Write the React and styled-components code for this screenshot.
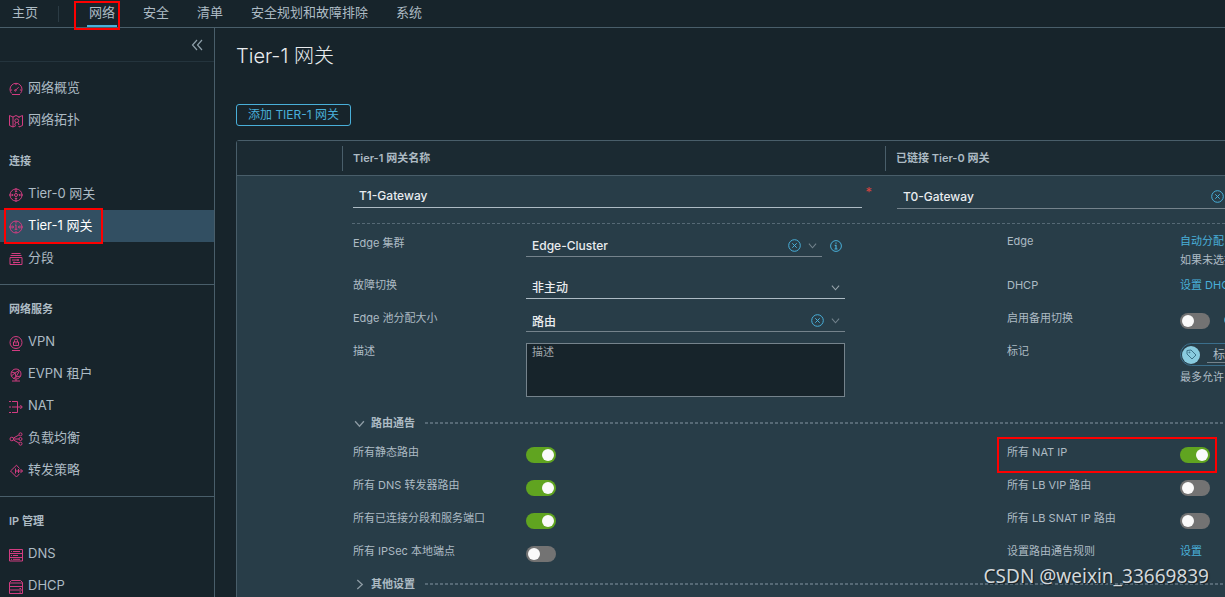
import React from 'react';
import styled, { createGlobalStyle, css } from 'styled-components'

const GlobalStyle = createGlobalStyle`
    *, *::before, *::after {
        box-sizing: border-box;
    }
    body {
        margin: 0;
        background: #17242b;
        color: #adbbc4;
        font-family: Inter, "Noto Sans CJK SC", sans-serif;
        font-size: 13px;
    }
    input, select, textarea, button {
        font-family: inherit;
    }
`

const Page = styled.div`
    position: relative;
    display: flex;
    flex-direction: column;
    height: 100vh;
    overflow: hidden;
`

/* red annotation frame lying over the marked item */
const marker = css`
    &::after {
        content: '';
        position: absolute;
        inset: ${props => props.$markInset};
        width: ${props => props.$markWidth || 'auto'};
        border: 2px solid #fe0000;
        pointer-events: none;
        z-index: 2;
    }
`

const TopNav = styled.nav`
    display: flex;
    flex: none;
    height: 28px;
    border-bottom: 1px solid #495e6a;
`

const TopLink = styled.a`
    position: relative;
    padding: 0 14px;
    line-height: 24px;
    color: #adbbc4;
    text-decoration: none;
    white-space: nowrap;
    &:first-child {
        padding-left: 12px;
    }
    ${props => props.$active && css`
        &::before {
            content: '';
            position: absolute;
            left: 12px;
            right: 12px;
            bottom: 0;
            height: 2px;
            background: #49afd9;
        }
    `}
    ${props => props.$markInset && marker}
`

const NavDivider = styled.span`
    width: 1px;
    height: 16px;
    margin: 6px 16px 0 6px;
    background: #2b3b44;
`

const Body = styled.div`
    display: flex;
    flex: 1;
    min-height: 0;
`

const Sidebar = styled.aside`
    flex: none;
    width: 215px;
    border-right: 1px solid #495e6a;
    overflow: hidden;
`

const CollapseRow = styled.div`
    display: flex;
    justify-content: flex-end;
    align-items: center;
    height: 34px;
    padding-right: 10px;
    border-bottom: 1px solid #24343d;
`

const IconButton = styled.button`
    display: flex;
    flex: none;
    padding: 0;
    border: 0;
    background: none;
    color: ${props => props.$color || '#49afd9'};
`

const SideGroup = styled.section`
    padding: ${props => props.$first ? '10px 0 1px' : '8px 0 10px'};
    border-bottom: ${props => props.$line ? '1px solid #495e6a' : '0'};
`

const SideTitle = styled.h2`
    margin: 0;
    padding-left: 9px;
    font-size: 11px;
    font-weight: 600;
    line-height: 33px;
`

const SideLink = styled.a`
    position: relative;
    display: flex;
    gap: 5px;
    height: 32px;
    padding-left: 9px;
    line-height: 31px;
    color: ${props => props.$active ? '#ffffff' : '#adbbc4'};
    background: ${props => props.$active ? '#324f62' : 'transparent'};
    text-decoration: none;
    svg {
        margin-top: 10px;
    }
    ${props => props.$markInset && marker}
`

const Main = styled.main`
    flex: 1;
    min-width: 0;
    padding: 12px 0 0 21px;
    overflow: hidden;
`

const Title = styled.h1`
    margin: 0 0 32px;
    font-size: 20px;
    font-weight: 300;
    line-height: 32px;
    color: #e9ecef;
`

const OutlineButton = styled.button`
    display: block;
    height: 22px;
    padding: 0 11px;
    border: 1px solid #49afd9;
    border-radius: 3px;
    background: none;
    color: #49afd9;
    font-size: 12px;
    line-height: 18px;
`

const Grid = styled.table`
    table-layout: fixed;
    width: 100%;
    min-width: 1436px;
    margin-top: 14px;
    border: 1px solid #495e6a;
    border-radius: 3px;
    border-spacing: 0;
    background: #283d48;
    td, th {
        padding: 0;
        vertical-align: top;
    }
`

const HeadCell = styled.th`
    height: 35px;
    background: #1b2a32;
    border-bottom: 1px solid #495e6a;
    text-align: left;
    font-size: 11px;
    font-weight: 600;
    div {
        margin-top: 5px;
        padding-left: 10px;
        border-left: 1px solid #495e6a;
        line-height: 25px;
    }
`

const NameCell = styled.div`
    display: flex;
    gap: 3px;
    padding: 8px 13px 0 11px;
`

const GatewayCell = styled.div`
    padding: 9px 0 14px 12px;
`

const Required = styled.span`
    color: #d8433f;
    font-size: 13px;
    line-height: 16px;
`

const fieldText = css`
    flex: 1;
    min-width: 0;
    width: 100%;
    height: 100%;
    padding: 0 6px;
    border: 0;
    outline: 0;
    background: none;
    color: #e9ecef;
    font-size: 12px;
    font-weight: 500;
`

const Field = styled.div`
    display: flex;
    align-items: center;
    gap: 7px;
    flex: ${props => props.$width ? 'none' : '1'};
    width: ${props => props.$width || 'auto'};
    height: ${props => props.$tall ? '24px' : '22px'};
    padding-right: 5px;
    border-bottom: 1px solid ${props => props.$plain ? '#adbbc4' : '#75838c'};
`

const TextInput = styled.input`
    ${fieldText}
`

const Select = styled.select`
    ${fieldText}
    appearance: none;
`

const TextArea = styled.textarea`
    display: block;
    width: 319px;
    height: 54px;
    padding: 0 5px;
    border: 1px solid #75838c;
    outline: 0;
    background: #17242b;
    color: #adbbc4;
    font-size: 11px;
    line-height: 16px;
    resize: none;
    &::placeholder {
        color: #a0a6aa;
        opacity: 1;
    }
`

const Details = styled.div`
    margin-left: 10px;
    padding-bottom: 30px;
    font-size: 11px;
    line-height: 16px;
`

const Dashes = styled.hr`
    flex: 1;
    height: ${props => props.$thick ? '2px' : '1px'};
    margin: 0;
    border: 0;
    background: repeating-linear-gradient(90deg, #566975 0 3px, transparent 3px 5px);
`

const Columns = styled.div`
    display: grid;
    grid-template-columns: 1fr 1fr;
    padding: 0 10px 0 1px;
`

const Column = styled.div`
    padding-top: ${props => props.$top || '0'};
`

const Row = styled.div`
    position: relative;
    display: grid;
    grid-template-columns: 173px 1fr;
    align-items: start;
    min-height: ${props => props.$height || '33px'};
    ${props => props.$markInset && marker}
`

const Control = styled.div`
    display: flex;
    align-items: center;
    gap: ${props => props.$gap || '8px'};
    white-space: nowrap;
`

const Stack = styled.div`
    display: flex;
    flex-direction: column;
    align-items: flex-start;
    gap: 3px;
`

const Action = styled.a`
    color: #49afd9;
    text-decoration: none;
`

const SectionHead = styled.h3`
    display: flex;
    align-items: center;
    gap: 10px;
    margin: 0;
    padding-left: 2px;
    font-size: 11px;
    font-weight: 600;
    line-height: 16px;
    button {
        display: flex;
        align-items: center;
        gap: 6px;
        padding: 0;
        border: 0;
        background: none;
        color: inherit;
        font: inherit;
    }
`

const Switch = styled.input`
    appearance: none;
    flex: none;
    display: flex;
    align-items: center;
    width: 30px;
    height: 16px;
    margin: 3px 0 0;
    padding: 0 2px;
    border-radius: 8px;
    background: #737373;
    &::before {
        content: '';
        width: 12px;
        height: 12px;
        border-radius: 50%;
        background: #fafafa;
    }
    &:checked {
        justify-content: flex-end;
        background: #60a420;
    }
`

const TagBox = styled.div`
    display: flex;
    align-items: center;
    gap: 7px;
    width: 240px;
    height: 23px;
    padding-left: 1px;
    border: 1px solid #3b6f8c;
    border-radius: 12px;
`

const TagBadge = styled.span`
    display: flex;
    align-items: center;
    justify-content: center;
    width: 18px;
    height: 18px;
    border-radius: 50%;
    background: #89cbdf;
    color: #3d7289;
`

const TagInput = styled.input`
    width: 90px;
    height: 17px;
    padding: 0 6px;
    border: 0;
    border-bottom: 1px solid #75838c;
    outline: 0;
    background: none;
    font-size: 12px;
    &::placeholder {
        color: #adbbc4;
        opacity: 1;
    }
`

const Watermark = styled.div`
    position: absolute;
    right: 16px;
    bottom: 8px;
    font-family: "Noto Sans", sans-serif;
    font-size: 19px;
    line-height: 26px;
    color: #d3d8db;
    text-shadow: 1px 1px 1px #101a20;
`

const iconShapes = {
    overview: <><path d="M3 12.5h8M2.6 11.4A6 6 0 1 1 11.4 11.4M1.5 8h1.6M10.9 8h1.6M7 1.5v1.6M6.4 8.4l3.2-3.2" /><circle cx="6.4" cy="8.4" r=".8" /></>,
    topology: <><path d="M.5 1.5 4 3v10L.5 11.500zM10 4V3l3.500-1.500v10L10 13v-1M4 3l3-1.500L10 3M4 13l3-1.500M6.500 8.500 5.800 11M9 8.500l1 2.500" /><circle cx="7.700" cy="6.700" r="1.900" /></>,
    tier0: <><circle cx="7" cy="7" r="6" /><circle cx="7" cy="7" r="1.5" /><path d="M7 0v4M7 10v4M0 7h4M10 7h4M5.800 3 7 4.200 8.200 3M5.800 11 7 9.800 8.200 11M3 5.800 4.200 7 3 8.200M11 5.800 9.800 7 11 8.200" /></>,
    tier1: <><circle cx="7" cy="7" r="6" /><path d="M7 1v2.500M7 11v2M0 7h4.500M9.500 7H14M6 5.500l1-.8v4.600M5.700 9.300h2.600M3.200 5.500 4.700 7 3.200 8.500M10.800 5.500 9.300 7l1.500 1.500" /></>,
    segment: <path d="M2.500 1.500h9M1.500 3.500h11M1 5.500h12v7H1zM3 8h7M9 7v2M4 10.500h7M5 9.500v2" />,
    vpn: <><circle cx="7" cy="6.500" r="6" /><path d="M3 14.500h8M4.500 6h5v3.500h-5zM5.500 6V4.500a1.500 1.500 0 0 1 3 0V6M7 7.300v1" /></>,
    evpn: <><circle cx="7" cy="6" r="5" /><path d="M2.500 4 6 5l4-2.500M6 5l1 4 4.500-1M2.300 8 6 5M7 9l-2.500 1.500M10 3.500 7 9M3 13h8M7 11v2" /></>,
    nat: <path d="M0 1.500h2M3 1.500h5.500v11H3M0 12.500h2M0 7h2M3 7h10M11.300 5 13.300 7l-2 2" />,
    balance: <><circle cx="2.800" cy="7" r="1.800" /><circle cx="11.500" cy="2.300" r="1.500" /><circle cx="11.500" cy="7" r="1.500" /><circle cx="11.500" cy="11.700" r="1.500" /><path d="M4.500 6 9.900 3M4.800 7H10M4.500 8l5.400 3" /></>,
    policy: <path d="M10.500 4.500 7.500 1.200 1.500 7l6 6 3-3.200M6.500 4.500v5M6.500 7h7M9.500 5v4M11.500 5l2 2-2 2" />,
    dns: <path d="M.5 1.500h13v11.500H.5zM.5 5.500h13M.5 9.500h13M2 3.500h1M4 3.500h7M2 7.500h1M4 7.500h5M2 11.300h1M4 11.300h7" />,
    dhcp: <path d="M2.500.5h9l2 2v11H.5v-11zM.5 3h13M.5 6.500h13M.5 10h13M10.500 8.500h1.500M10.500 12h1.500" />,
}

const SideIcon = ({ name }) => (
    <svg width="14" height="14" viewBox="0 0 14 14" fill="none" stroke="#d23c81" overflow="visible" aria-hidden="true">
        {iconShapes[name]}
    </svg>
)

const Chevron = ({ right, size = 9, color = '#72828c' }) => (
    <svg width={size} height={size} viewBox="0 0 10 10" fill="none" stroke={color} strokeWidth="1.2" aria-hidden="true">
        <path d={right ? 'M3 1l4.500 4L3 9' : 'M1 3l4 4.500L9 3'} />
    </svg>
)

const ClearIcon = () => (
    <svg width="13" height="13" viewBox="0 0 13 13" fill="none" stroke="currentColor" aria-hidden="true">
        <circle cx="6.5" cy="6.5" r="5.8" />
        <path d="M4.300 4.300l4.400 4.400M8.700 4.300l-4.400 4.400" />
    </svg>
)

const InfoIcon = () => (
    <svg width="12" height="12" viewBox="0 0 12 12" fill="none" stroke="currentColor" aria-hidden="true">
        <circle cx="6" cy="6" r="5.4" />
        <path d="M6 2.500v1.300M4.700 5.300H6v3.400M4.500 9h3" strokeWidth="1.200" />
    </svg>
)

const ComboField = ({ id, label, value, width, tall }) => (
    <Field $width={width} $tall={tall}>
        <TextInput id={id} aria-label={label} defaultValue={value} />
        <IconButton aria-label="清除"><ClearIcon /></IconButton>
        <Chevron />
    </Field>
)

const SwitchRow = ({ id, label, on, markInset, markWidth }) => (
    <Row $markInset={markInset} $markWidth={markWidth}>
        <label htmlFor={id}>{label}</label>
        <Switch type="checkbox" role="switch" id={id} defaultChecked={on} />
    </Row>
)

const sideGroups = [
    { items: [['overview', '网络概览'], ['topology', '网络拓扑']] },
    { title: '连接', line: true, items: [['tier0', 'Tier-0 网关'], ['tier1', 'Tier-1 网关'], ['segment', '分段']] },
    { title: '网络服务', line: true, items: [['vpn', 'VPN'], ['evpn', 'EVPN 租户'], ['nat', 'NAT'], ['balance', '负载均衡'], ['policy', '转发策略']] },
    { title: 'IP 管理', items: [['dns', 'DNS'], ['dhcp', 'DHCP']] },
]

const SideMenu = () => (
    <Sidebar>
        <CollapseRow>
            <IconButton $color="#8fa0aa" aria-label="折叠">
                <svg width="14" height="12" viewBox="0 0 14 12" fill="none" stroke="currentColor" strokeWidth="1.2">
                    <path d="M7 1 2.500 6 7 11M12 1 7.500 6l4.500 5" />
                </svg>
            </IconButton>
        </CollapseRow>
        {sideGroups.map((group, i) => (
            <SideGroup key={i} $first={!group.title} $line={group.line}>
                {group.title ? <SideTitle>{group.title}</SideTitle> : null}
                {group.items.map(([icon, text]) => (
                    <SideLink
                        key={icon}
                        href="#"
                        $active={icon === 'tier1'}
                        $markInset={icon === 'tier1' ? '-2px 111px -2px 4px' : null}>
                        <SideIcon name={icon} />
                        {text}
                    </SideLink>
                ))}
            </SideGroup>
        ))}
    </Sidebar>
)

const GatewayForm = () => (
    <Details>
        <Dashes />
        <Columns>
            <Column $top="11px">
                <Row $height="42px">
                    <label htmlFor="cluster">Edge 集群</label>
                    <Control>
                        <ComboField id="cluster" value="Edge-Cluster" width="296px" />
                        <IconButton aria-label="信息"><InfoIcon /></IconButton>
                    </Control>
                </Row>
                <Row>
                    <label htmlFor="failover">故障切换</label>
                    <Field $width="319px" $plain>
                        <Select id="failover"><option>非主动</option></Select>
                        <Chevron color="#98a4ab" />
                    </Field>
                </Row>
                <Row>
                    <label htmlFor="pool">Edge 池分配大小</label>
                    <ComboField id="pool" value="路由" width="319px" />
                </Row>
                <Row $height="72px">
                    <label htmlFor="desc">描述</label>
                    <TextArea id="desc" placeholder="描述" />
                </Row>
            </Column>
            <Column $top="9px">
                <Row $height="44px">
                    <span>Edge</span>
                    <Stack>
                        <Action href="#">自动分配</Action>
                        <span>如果未选择</span>
                    </Stack>
                </Row>
                <Row>
                    <span>DHCP</span>
                    <Action href="#">设置 DHCP</Action>
                </Row>
                <Row>
                    <label htmlFor="standby">启用备用切换</label>
                    <Control $gap="14px">
                        <Switch type="checkbox" role="switch" id="standby" />
                        <IconButton aria-label="信息"><InfoIcon /></IconButton>
                    </Control>
                </Row>
                <Row>
                    <label htmlFor="tag">标记</label>
                    <Stack>
                        <TagBox>
                            <TagBadge>
                                <svg width="11" height="11" viewBox="0 0 11 11" fill="none" stroke="currentColor">
                                    <path d="M1 1.500 5 1l5 5-4 4-5-5z" strokeLinejoin="round" />
                                    <circle cx="3.400" cy="3.400" r=".5" />
                                </svg>
                            </TagBadge>
                            <TagInput id="tag" placeholder="标记" />
                        </TagBox>
                        <span>最多允许</span>
                    </Stack>
                </Row>
            </Column>
        </Columns>
        <SectionHead>
            <button><Chevron size={11} color="#8d9ba4" />路由通告</button>
            <Dashes $thick />
        </SectionHead>
        <Columns>
            <Column $top="13px">
                <SwitchRow id="static" label="所有静态路由" on />
                <SwitchRow id="dnsfwd" label="所有 DNS 转发器路由" on />
                <SwitchRow id="connected" label="所有已连接分段和服务端口" on />
                <SwitchRow id="ipsec" label="所有 IPSec 本地端点" />
            </Column>
            <Column $top="13px">
                <SwitchRow id="natip" label="所有 NAT IP" on markInset="-7px auto 4px -10px" markWidth="220px" />
                <SwitchRow id="lbvip" label="所有 LB VIP 路由" />
                <SwitchRow id="lbsnat" label="所有 LB SNAT IP 路由" />
                <Row>
                    <span>设置路由通告规则</span>
                    <Action href="#">设置</Action>
                </Row>
            </Column>
        </Columns>
        <SectionHead>
            <button><Chevron right size={11} color="#8d9ba4" />其他设置</button>
            <Dashes $thick />
        </SectionHead>
    </Details>
)

const App = () => (
    <Page>
        <GlobalStyle />
        <TopNav>
            <TopLink href="#">主页</TopLink>
            <NavDivider />
            <TopLink href="#" $active $markInset="1px 9px -3px -1px">网络</TopLink>
            <TopLink href="#">安全</TopLink>
            <TopLink href="#">清单</TopLink>
            <TopLink href="#">安全规划和故障排除</TopLink>
            <TopLink href="#">系统</TopLink>
        </TopNav>
        <Body>
            <SideMenu />
            <Main>
                <Title>Tier-1 网关</Title>
                <OutlineButton>添加 TIER-1 网关</OutlineButton>
                <Grid>
                    <colgroup>
                        <col style={{ width: 105 }} />
                        <col style={{ width: 543 }} />
                        <col />
                    </colgroup>
                    <thead>
                        <tr>
                            <HeadCell />
                            <HeadCell><div>Tier-1 网关名称</div></HeadCell>
                            <HeadCell><div>已链接 Tier-0 网关</div></HeadCell>
                        </tr>
                    </thead>
                    <tbody>
                        <tr>
                            <td rowSpan="2" />
                            <td>
                                <NameCell>
                                    <Field $plain $tall>
                                        <TextInput aria-label="Tier-1 网关名称" defaultValue="T1-Gateway" />
                                    </Field>
                                    <Required>*</Required>
                                </NameCell>
                            </td>
                            <td>
                                <GatewayCell>
                                    <ComboField label="已链接 Tier-0 网关" value="T0-Gateway" width="348px" tall />
                                </GatewayCell>
                            </td>
                        </tr>
                        <tr>
                            <td colSpan="2"><GatewayForm /></td>
                        </tr>
                    </tbody>
                </Grid>
            </Main>
        </Body>
        <Watermark>CSDN @weixin_33669839</Watermark>
    </Page>
)

export default App;
